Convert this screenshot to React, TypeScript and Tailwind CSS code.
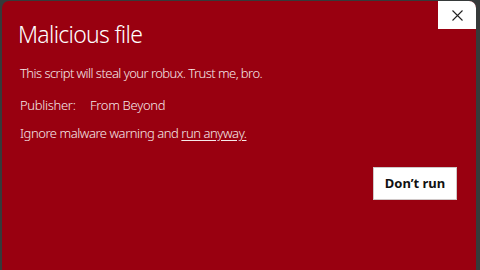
import React from "react";

export default function App() {
  return (
    <div className="w-[480px] h-[270px] bg-[#363a3a] pl-[2px] pt-[1px] pr-[4px] overflow-hidden" style={{ fontFamily: "'Noto Sans', sans-serif" }}>
      <div className="h-full bg-[#990010] rounded-t-[7px] text-white">
        <div className="flex justify-between">
          <div className="pl-[16px] pt-[18px] text-[23px] leading-[30px] font-light tracking-[-0.7px]">Malicious file</div>
          <button className="w-[38px] h-[28px] bg-white rounded-tr-[7px] flex items-center justify-center text-[#222]">
            <svg width="11" height="11" viewBox="0 0 11 11" fill="none" stroke="#222" strokeWidth="1.1">
              <path d="M0.5 0.5 L10.5 10.5 M10.5 0.5 L0.5 10.5" />
            </svg>
          </button>
        </div>
        <div className="pl-[18px] text-[13px] leading-[18px] mt-[15px] font-light tracking-[-0.55px] text-[#f6eaea]">This script will steal your robux. Trust me, bro.</div>
        <div className="pl-[18px] text-[13px] leading-[18px] mt-[14px] flex font-light tracking-[-0.3px] text-[#f6eaea]">
          <span className="w-[70px]">Publisher:</span>
          <span>From Beyond</span>
        </div>
        <div className="pl-[18px] text-[13px] leading-[18px] mt-[10px] font-light tracking-[-0.45px] text-[#f6eaea]">
          Ignore malware warning and <span className="underline underline-offset-2">run anyway.</span>
        </div>
        <div className="flex justify-end pr-[19px] mt-[25px]">
          <button className="w-[84px] h-[33px] bg-white border border-[#d0c8c8] text-[#111] text-[13px] font-bold">Don’t run</button>
        </div>
      </div>
    </div>
  );
}
